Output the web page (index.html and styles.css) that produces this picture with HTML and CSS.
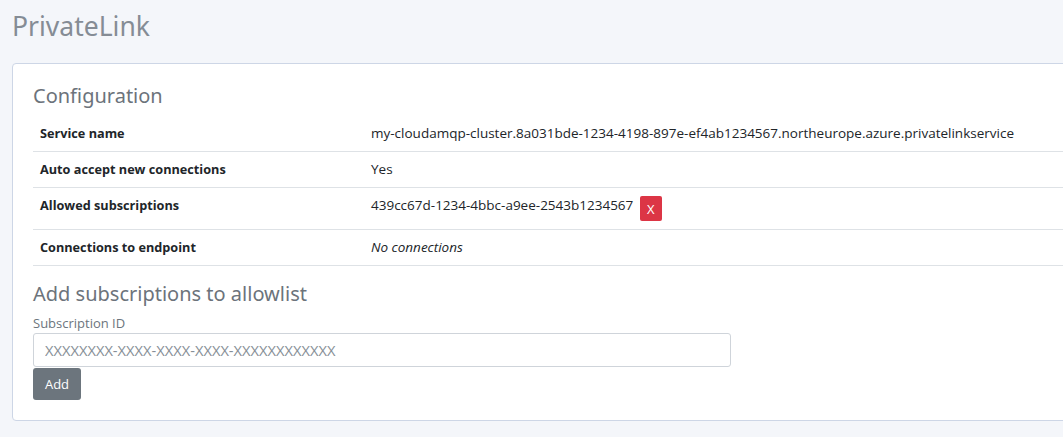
FILE: index.html
```html
<!DOCTYPE html>
<html lang="en">
<head>
    <meta charset="UTF-8">
    <title>PrivateLink</title>
    <link rel="stylesheet" href="styles.css">
</head>
<body>

    <h1 class="page-title">PrivateLink</h1>

    <div class="card">
        <!-- Configuration -->
        <h2 class="section-title">Configuration</h2>
        <table class="config-table">
            <tr>
                <th>Service name</th>
                <td>my-cloudamqp-cluster.8a031bde-1234-4198-897e-ef4ab1234567.northeurope.azure.privatelinkservice</td>
            </tr>
            <tr>
                <th>Auto accept new connections</th>
                <td>Yes</td>
            </tr>
            <tr>
                <th>Allowed subscriptions</th>
                <td>439cc67d-1234-4bbc-a9ee-2543b1234567 <button class="btn-remove">X</button></td>
            </tr>
            <tr>
                <th>Connections to endpoint</th>
                <td><em>No connections</em></td>
            </tr>
        </table>

        <!-- Allowlist form -->
        <h2 class="section-title add-title">Add subscriptions to allowlist</h2>
        <form class="allow-form">
            <label for="subscriptionId">Subscription ID</label>
            <input type="text" id="subscriptionId" placeholder="XXXXXXXX-XXXX-XXXX-XXXX-XXXXXXXXXXXX">
            <button type="submit" class="btn-add">Add</button>
        </form>
    </div>

</body>
</html>
```

FILE: styles.css
```css
body {
    font-family: "Open Sans", "Noto Sans", sans-serif;
    background-color: #f4f6fa;
    color: #212529;
    margin: 0;
    padding: 12px;
    overflow: hidden;
}
.page-title {
    font-family: "Noto Sans", sans-serif;
    font-size: 26.5px;
    font-weight: 400;
    line-height: 28px;
    color: #858c95;
    margin: 0 0 23px 0;
}
.card {
    width: 1100px;
    background: white;
    border: 1px solid #cdd6e6;
    border-radius: 4px;
    padding: 20px;
}
.section-title {
    font-family: "Noto Sans", sans-serif;
    font-size: 20px;
    font-weight: 400;
    line-height: 24px;
    color: #6c737b;
    margin: 0 0 8px 0;
}
.add-title {
    margin: 16px 0 8px 0;
}
.config-table {
    width: 100%;
    table-layout: fixed;
    border-collapse: collapse;
    font-size: 13.5px;
}
.config-table th, .config-table td {
    text-align: left;
    vertical-align: top;
    padding: 8px 7px;
    line-height: 19px;
    border-bottom: 1px solid #dee2e6;
}
.config-table th {
    width: 317px;
    font-size: 12.7px;
    font-weight: 700;
}
.btn-remove {
    font-family: inherit;
    font-size: 13px;
    color: white;
    background-color: #dc3545;
    border: none;
    border-radius: 2px;
    width: 22px;
    height: 25px;
    padding: 0;
    margin-left: 3px;
    vertical-align: top;
}
.allow-form label {
    display: block;
    font-size: 13px;
    line-height: 19px;
    color: #6c757d;
}
.allow-form input[type="text"] {
    display: block;
    box-sizing: border-box;
    width: 698px;
    height: 34px;
    padding: 0 11px;
    border: 1px solid #cfd4da;
    border-radius: 3px;
    font-family: inherit;
    font-size: 14.7px;
}
.allow-form input::placeholder {
    color: #868e96;
}
.btn-add {
    display: block;
    margin-top: 1px;
    width: 48px;
    height: 32px;
    font-family: inherit;
    font-size: 13px;
    color: white;
    background-color: #6c757d;
    border: none;
    border-radius: 3px;
}
```
